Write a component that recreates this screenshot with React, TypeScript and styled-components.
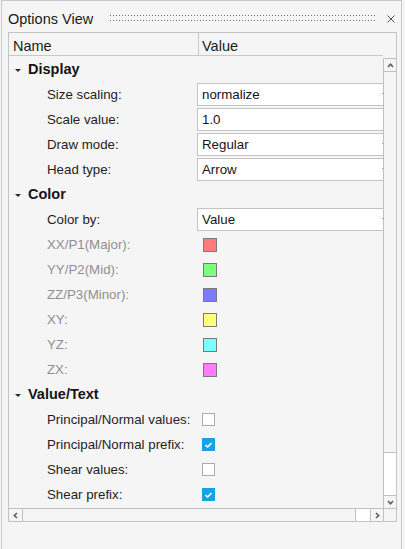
import styled, { createGlobalStyle } from 'styled-components';

const GlobalStyle = createGlobalStyle`
  html, body {
    margin: 0;
    padding: 0;
    background: #f5f5f5;
  }
  body {
    font-family: 'Liberation Sans', Arial, sans-serif;
    color: #1e1e1e;
  }
  * {
    box-sizing: border-box;
  }
`;

type Row =
  | { kind: 'section'; title: string }
  | { kind: 'select'; label: string; value: string }
  | { kind: 'input'; label: string; value: string }
  | { kind: 'color'; label: string; color: string }
  | { kind: 'check'; label: string; checked: boolean };

const rows: Row[] = [
  { kind: 'section', title: 'Display' },
  { kind: 'select', label: 'Size scaling:', value: 'normalize' },
  { kind: 'input', label: 'Scale value:', value: '1.0' },
  { kind: 'select', label: 'Draw mode:', value: 'Regular' },
  { kind: 'select', label: 'Head type:', value: 'Arrow' },
  { kind: 'section', title: 'Color' },
  { kind: 'select', label: 'Color by:', value: 'Value' },
  { kind: 'color', label: 'XX/P1(Major):', color: '#ff7b7b' },
  { kind: 'color', label: 'YY/P2(Mid):', color: '#7bff7b' },
  { kind: 'color', label: 'ZZ/P3(Minor):', color: '#7b7bff' },
  { kind: 'color', label: 'XY:', color: '#ffff7b' },
  { kind: 'color', label: 'YZ:', color: '#7bffff' },
  { kind: 'color', label: 'ZX:', color: '#ff7bff' },
  { kind: 'section', title: 'Value/Text' },
  { kind: 'check', label: 'Principal/Normal values:', checked: false },
  { kind: 'check', label: 'Principal/Normal prefix:', checked: true },
  { kind: 'check', label: 'Shear values:', checked: false },
  { kind: 'check', label: 'Shear prefix:', checked: true },
];

const Panel = styled.div`
  margin-left: 1px;
  width: 401px;
  height: 549px;
  border: 1px solid #c8c8c8;
  border-bottom: none;
  background: #f5f5f5;
`;

const TitleBar = styled.div`
  display: flex;
  align-items: flex-start;
  height: 31px;
  padding: 0 6px 0 6px;
`;

const Title = styled.div`
  margin-top: 10px;
  font-size: 14.5px;
  line-height: 17px;
  color: #1a1a1a;
  white-space: nowrap;
`;

const Grip = styled.div`
  flex: 1;
  height: 6px;
  margin: 14px 11px 0 17px;
  display: flex;
  flex-direction: column;
  justify-content: space-between;

  &::before,
  &::after {
    content: '';
    height: 1px;
    background: repeating-linear-gradient(
      to right,
      #737373 0 1px,
      transparent 1px 3px
    );
  }
`;

const CloseButton = styled.svg`
  margin-top: 14px;
  flex: 0 0 auto;
`;

const Frame = styled.div`
  margin-left: 6px;
  width: 389px;
  height: 490px;
  border: 1px solid #c4c4c4;
  display: grid;
  grid-template-columns: 374px 13px;
  grid-template-rows: 23px 452px 13px;
`;

const Header = styled.div`
  grid-column: 1;
  grid-row: 1;
  display: flex;
  border-bottom: 1px solid #c8c8c8;
`;

const HeaderCell = styled.div<{ $width?: number }>`
  flex: ${({ $width }) => ($width ? `0 0 ${$width}px` : '1')};
  padding: 4px 0 0 ${({ $width }) => ($width ? 4 : 3)}px;
  font-size: 14.5px;
  line-height: 18px;
  color: #1a1a1a;
  border-right: ${({ $width }) => ($width ? '1px solid #c8c8c8' : 'none')};
`;

const Body = styled.div`
  grid-column: 1;
  grid-row: 2;
  padding-top: 1px;
  overflow: hidden;
`;

const RowLine = styled.div`
  display: flex;
  align-items: center;
  height: 25px;
  white-space: nowrap;
`;

const Caret = styled.span`
  width: 0;
  height: 0;
  margin: 2px 7px 0 6px;
  border-left: 3px solid transparent;
  border-right: 3px solid transparent;
  border-top: 3px solid #2a2a2a;
`;

const SectionTitle = styled.span`
  font-size: 14.5px;
  font-weight: bold;
  line-height: 25px;
  color: #141414;
`;

const Label = styled.div<{ $disabled?: boolean }>`
  flex: 0 0 188px;
  padding-left: 38px;
  font-size: 13.3px;
  line-height: 25px;
  color: ${({ $disabled }) => ($disabled ? '#8f8f8f' : '#1e1e1e')};
`;

const Field = styled.div`
  flex: 0 0 196px;
  height: 23px;
  display: flex;
  align-items: center;
  justify-content: space-between;
  padding: 0 4px 0 4px;
  background: #fff;
  border: 1px solid #c3c3c3;
  font-size: 13.3px;
  line-height: 21px;
  color: #141414;
`;

const DropArrow = styled.span`
  width: 0;
  height: 0;
  border-left: 3px solid transparent;
  border-right: 3px solid transparent;
  border-top: 3px solid #333;
`;

const Swatch = styled.span<{ $color: string }>`
  width: 14px;
  height: 14px;
  margin-left: 6px;
  background: ${({ $color }) => $color};
  border: 1px solid #7a7a7a;
`;

const Check = styled.span<{ $checked: boolean }>`
  width: 13px;
  height: 13px;
  margin-left: 5px;
  display: flex;
  align-items: center;
  justify-content: center;
  background: ${({ $checked }) => ($checked ? '#16a3e3' : '#fff')};
  border: 1px solid ${({ $checked }) => ($checked ? '#16a3e3' : '#a9a9b2')};
`;

const VScroll = styled.div`
  grid-column: 2;
  grid-row: 2;
  margin-top: 2px;
  display: flex;
  flex-direction: column;
  border-left: 1px solid #c0c0c0;
`;

const ScrollButton = styled.div<{ $size: number; $edge: 'top' | 'bottom' | 'left' | 'right' | 'both' }>`
  flex: 0 0 ${({ $size }) => $size}px;
  display: flex;
  align-items: center;
  justify-content: center;
  background: #f5f5f5;
  ${({ $edge }) =>
    $edge === 'both'
      ? 'border-top: 1px solid #c0c0c0; border-bottom: 1px solid #c0c0c0;'
      : `border-${$edge}: 1px solid #c0c0c0;`}
`;

const Thumb = styled.div`
  flex: 1;
  background: #f5f5f5;
`;

const Track = styled.div<{ $size: number; $edge: 'top' | 'left' }>`
  flex: 0 0 ${({ $size }) => $size}px;
  background: #fff;
  border-${({ $edge }) => $edge}: 1px solid #c0c0c0;
`;

const HScroll = styled.div`
  grid-column: 1;
  grid-row: 3;
  display: flex;
  border-top: 1px solid #c0c0c0;
`;

const Corner = styled.div`
  grid-column: 2;
  grid-row: 3;
  border-top: 1px solid #c0c0c0;
  border-left: 1px solid #c0c0c0;
`;

const rotation = { up: 0, down: 180, left: -90, right: 90 };

const Chevron = ({ dir }: { dir: 'up' | 'down' | 'left' | 'right' }) => (
  <svg width="7" height="7" viewBox="0 0 7 7" style={{ transform: `rotate(${rotation[dir]}deg)` }}>
    <polyline points="1,5 3.5,2.3 6,5" fill="none" stroke="#5c5c5c" strokeWidth="1.6" />
  </svg>
);

const renderValue = (row: Row) => {
  switch (row.kind) {
    case 'select':
      return (
        <Field>
          <span>{row.value}</span>
          <DropArrow />
        </Field>
      );
    case 'input':
      return (
        <Field>
          <span>{row.value}</span>
        </Field>
      );
    case 'color':
      return <Swatch $color={row.color} />;
    case 'check':
      return (
        <Check $checked={row.checked}>
          {row.checked && (
            <svg width="9" height="8" viewBox="0 0 9 8">
              <polyline points="1.5,4.2 3.6,6 7.5,2" fill="none" stroke="#fff" strokeWidth="1.6" />
            </svg>
          )}
        </Check>
      );
    default:
      return null;
  }
};

export default function App() {
  return (
    <>
      <GlobalStyle />
      <Panel>
        <TitleBar>
          <Title>Options View</Title>
          <Grip />
          <CloseButton width="8" height="8" viewBox="0 0 8 8">
            <path d="M0.5 0.5 L7.5 7.5 M7.5 0.5 L0.5 7.5" stroke="#505050" strokeWidth="1" />
          </CloseButton>
        </TitleBar>
        <Frame>
          <Header>
            <HeaderCell $width={190}>Name</HeaderCell>
            <HeaderCell>Value</HeaderCell>
          </Header>
          <Body>
            {rows.map((row, i) =>
              row.kind === 'section' ? (
                <RowLine key={i}>
                  <Caret />
                  <SectionTitle>{row.title}</SectionTitle>
                </RowLine>
              ) : (
                <RowLine key={i}>
                  <Label $disabled={row.kind === 'color'}>{row.label}</Label>
                  {renderValue(row)}
                </RowLine>
              )
            )}
          </Body>
          <VScroll>
            <ScrollButton $size={14} $edge="both">
              <Chevron dir="up" />
            </ScrollButton>
            <Thumb />
            <Track $size={43} $edge="top" />
            <ScrollButton $size={13} $edge="top">
              <Chevron dir="down" />
            </ScrollButton>
          </VScroll>
          <HScroll>
            <ScrollButton $size={14} $edge="right">
              <Chevron dir="left" />
            </ScrollButton>
            <Thumb />
            <Track $size={15} $edge="left" />
            <ScrollButton $size={13} $edge="left">
              <Chevron dir="right" />
            </ScrollButton>
          </HScroll>
          <Corner />
        </Frame>
      </Panel>
    </>
  );
}
